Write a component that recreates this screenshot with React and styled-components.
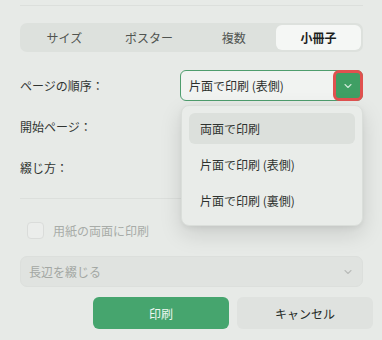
import React from 'react'
import styled, { createGlobalStyle } from 'styled-components'

const Global = createGlobalStyle`
  html, body { margin: 0; padding: 0; background: #e7eae7; }
  body {
    font-family: "Noto Sans CJK JP", "Noto Sans", sans-serif;
    color: #2b2f2c;
    -webkit-font-smoothing: antialiased;
  }
`

const Page = styled.div`
  width: 382px;
  height: 340px;
  box-sizing: border-box;
  padding: 5px 19px 0 20px;
  display: flex;
  flex-direction: column;
`

const Rule = styled.div`
  height: 1px;
  background: #dcdfdc;
  margin: ${({ $m }) => $m || '0'};
`

const Tabs = styled.div`
  margin-top: 17px;
  height: 29px;
  background: #dde1dd;
  border-radius: 7px;
  display: grid;
  grid-template-columns: repeat(4, 1fr);
  padding: 2px;
  box-sizing: border-box;
`

const Tab = styled.div`
  display: flex;
  align-items: center;
  justify-content: center;
  font-size: 12px;
  border-radius: 6px;
  color: ${({ $on }) => ($on ? '#1c1f1d' : '#505450')};
  font-weight: ${({ $on }) => ($on ? 700 : 400)};
  background: ${({ $on }) => ($on ? '#f5f7f5' : 'transparent')};
`

const Form = styled.div`
  margin-top: 18px;
  display: flex;
  flex-direction: column;
  gap: 10px;
`

const Row = styled.div`
  display: flex;
  align-items: center;
  height: 31px;
  position: relative;
`

const Label = styled.div`
  width: 160px;
  font-size: 12px;
  color: #303431;
`

const Select = styled.div`
  flex: 1;
  height: 31px;
  box-sizing: border-box;
  border: 1px solid #4e9d6d;
  border-radius: 6px;
  background: #f1f3f1;
  display: flex;
  align-items: center;
  padding-left: 8px;
  font-size: 12px;
  position: relative;
`

const SelectText = styled.span`
  flex: 1;
`

const Toggle = styled.div`
  width: 30px;
  height: 31px;
  margin: -1px -1px -1px 0;
  box-sizing: border-box;
  border: 3px solid #e0514f;
  border-radius: 6px;
  background: #3f9f64;
  display: flex;
  align-items: center;
  justify-content: center;
`

const Menu = styled.div`
  position: absolute;
  top: 35px;
  left: 161px;
  width: 182px;
  height: 121px;
  box-sizing: border-box;
  background: #e9ece9;
  border: 1px solid #dadeda;
  border-radius: 8px;
  box-shadow: 0 8px 22px rgba(0, 0, 0, 0.13), 0 2px 5px rgba(0, 0, 0, 0.05);
  padding: 7px 7px;
  display: flex;
  flex-direction: column;
  gap: 5px;
  z-index: 2;
`

const Item = styled.div`
  height: 31px;
  border-radius: 6px;
  display: flex;
  align-items: center;
  padding-left: 11px;
  font-size: 12px;
  color: #2e322f;
  background: ${({ $hi }) => ($hi ? '#dce0dc' : 'transparent')};
`

const Check = styled.div`
  margin-top: 22px;
  display: flex;
  align-items: center;
  gap: 9px;
  padding-left: 7px;
  height: 18px;
  font-size: 12px;
  color: #a8aca8;
`

const Box = styled.div`
  width: 15px;
  height: 15px;
  border: 1px solid #dadcda;
  border-radius: 4px;
  background: #ebedeb;
`

const Disabled = styled.div`
  margin-top: 17px;
  height: 31px;
  box-sizing: border-box;
  border: 1px solid #dcdfdc;
  border-radius: 7px;
  background: #e0e3e0;
  display: flex;
  align-items: center;
  justify-content: space-between;
  padding: 0 10px 0 8px;
  font-size: 12px;
  color: #a3a7a3;
`

const Footer = styled.div`
  margin-top: 10px;
  margin-right: -10px;
  display: flex;
  justify-content: flex-end;
  gap: 8px;
`

const Button = styled.div`
  width: 136px;
  height: 32px;
  border-radius: 6px;
  display: flex;
  align-items: center;
  justify-content: center;
  font-size: 12px;
  background: ${({ $primary }) => ($primary ? '#46a56e' : '#dfe2df')};
  color: ${({ $primary }) => ($primary ? '#eef7f1' : '#262a27')};
`

const Chevron = ({ color }) => (
  <svg width="8" height="6" viewBox="0 0 8 6">
    <path d="M1 1.5 L4 4.5 L7 1.5" fill="none" stroke={color} strokeWidth="1.1" strokeLinecap="round" strokeLinejoin="round" />
  </svg>
)

export default function App() {
  return (
    <Page>
      <Global />
      <Rule />
      <Tabs>
        <Tab>サイズ</Tab>
        <Tab>ポスター</Tab>
        <Tab>複数</Tab>
        <Tab $on>小冊子</Tab>
      </Tabs>
      <Form>
        <Row>
          <Label>ページの順序：</Label>
          <Select>
            <SelectText>片面で印刷 (表側)</SelectText>
            <Toggle>
              <Chevron color="#cfe9d8" />
            </Toggle>
          </Select>
          <Menu>
            <Item $hi>両面で印刷</Item>
            <Item>片面で印刷 (表側)</Item>
            <Item>片面で印刷 (裏側)</Item>
          </Menu>
        </Row>
        <Row>
          <Label>開始ページ：</Label>
        </Row>
        <Row>
          <Label>綴じ方：</Label>
        </Row>
      </Form>
      <Rule $m="15px 0 0" />
      <Check>
        <Box />
        用紙の両面に印刷
      </Check>
      <Disabled>
        長辺を綴じる
        <Chevron color="#b9bcb9" />
      </Disabled>
      <Footer>
        <Button $primary>印刷</Button>
        <Button>キャンセル</Button>
      </Footer>
    </Page>
  )
}
